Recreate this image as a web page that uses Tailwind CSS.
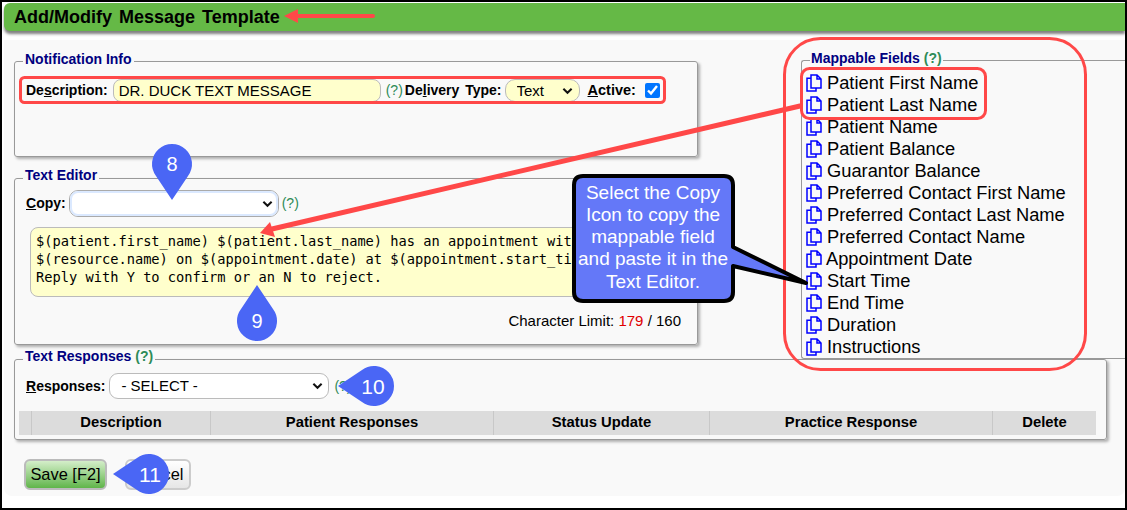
<!DOCTYPE html>
<html lang="en">
  <head>
    <meta charset="utf-8" />
    <meta name="viewport" content="width=device-width, initial-scale=1" />
    <title>Add/Modify Message Template</title>
    <script src="https://cdn.jsdelivr.net/npm/@tailwindcss/browser@4"></script>
  </head>
  <body class="bg-black h-[510px] overflow-hidden font-['Liberation_Sans',Arial,sans-serif] text-black">
    <svg class="hidden">
      <symbol id="copy" viewBox="0 0 16 18">
        <path d="M5 4.2H1V17H10V14M5 1H11L15 5V14H5ZM11 1V5H15" fill="none" stroke="#0000ff" stroke-width="1.5" />
      </symbol>
      <symbol id="chevron" viewBox="0 0 12 8">
        <path d="M1.5 1.5L6 6L10.5 1.5" fill="none" stroke="#111" stroke-width="2.2" />
      </symbol>
    </svg>
    <div class="relative mx-[2px] mt-[2px] h-[506px] bg-white">
      <header class="ml-[2px] h-[28px] mt-[1px] translate-y-[1px] pl-[10px] flex items-center bg-[#65b946] rounded-tl-[6px] rounded-bl-[6px] shadow-[0_3px_3px_rgba(0,0,0,0.5)]">
        <h1 class="text-[18px] font-bold [word-spacing:2px]">Add/Modify Message Template</h1>
      </header>
      <main class="absolute left-[2px] right-0 top-[38px] h-[456px] bg-[#f9f9f9] rounded-b-[8px] pl-[10px]">
        <div class="flex h-[320px]">
          <div class="w-[684px] shrink-0 pt-[14px]">
            <fieldset class="h-[103px] border border-[#999] rounded-[3px] shadow-[2px_2px_3px_rgba(0,0,0,0.3)] px-[6px]">
              <legend class="ml-[2px] px-[2px] text-[14px] leading-[15px] font-bold text-[#000080] -translate-y-[2px]">Notification Info</legend>
              <div class="flex items-center h-[23px] mt-[10px] ml-[5px] text-[14px] font-bold">
                <label>De<u>s</u>cription:</label>
                <input value="DR. DUCK TEXT MESSAGE" class="ml-[5px] w-[268px] h-[23px] pl-[5px] bg-[#ffffcc] border border-[#bbb] rounded-[8px] text-[15px] font-normal" />
                <span class="ml-[5px] font-normal text-[#2e8b57]">(?)</span>
                <label class="ml-[2px] [word-spacing:2px]">De<u>l</u>ivery Type:</label>
                <span class="relative ml-[3px]">
                  <select class="block appearance-none w-[75px] h-[23px] pl-[11px] bg-[#ffffcc] border border-[#bbb] rounded-[10px] text-[15px] font-normal"><option>Text</option></select>
                  <svg class="absolute right-[7px] top-[8px] w-[11px] h-[8px]"><use href="#chevron" /></svg>
                </span>
                <label class="ml-[8px] text-[14.5px]"><u>A</u>ctive:</label>
                <input type="checkbox" checked class="ml-[9px] w-[15px] h-[15px] m-0" />
              </div>
            </fieldset>
            <fieldset class="mt-[14px] h-[174px] border border-[#999] rounded-[3px] shadow-[2px_2px_3px_rgba(0,0,0,0.3)] px-[6px]">
              <legend class="ml-[2px] px-[2px] text-[14px] leading-[15px] font-bold text-[#000080] -translate-y-[3px]">Text Editor</legend>
              <div class="ml-[5px]">
                <div class="flex items-center mt-[4px] h-[27px] text-[14px] font-bold">
                  <label><u>C</u>opy:</label>
                  <span class="relative ml-[3px]">
                    <select class="block appearance-none w-[210px] h-[27px] bg-white border border-[#aaa] rounded-[9px] outline-[2px] outline-offset-[-3px] outline-[#dbe9ff]"><option></option></select>
                    <svg class="absolute right-[6px] top-[10px] w-[11px] h-[8px]"><use href="#chevron" /></svg>
                  </span>
                  <span class="ml-[3px] font-normal text-[#2e8b57]">(?)</span>
                </div>
                <textarea rows="3" class="block mt-[10px] ml-[4px] w-[655px] h-[70px] px-[5px] py-[4px] bg-[#ffffcc] border border-[#bbb] rounded-[8px] resize-none font-['DejaVu_Sans_Mono',monospace] text-[13.7px] leading-[18px]">$(patient.first_name) $(patient.last_name) has an appointment with
$(resource.name) on $(appointment.date) at $(appointment.start_time).
Reply with Y to confirm or an N to reject.</textarea>
                <p class="mt-[15px] pr-[10px] text-right text-[15px] leading-[18px]">Character Limit: <span class="text-[#e00000]">179</span> / 160</p>
              </div>
            </fieldset>
          </div>
          <fieldset class="ml-[103px] mt-[13px] h-[306px] flex-1 border border-r-0 border-[#999] rounded-l-[3px] pl-[4px]">
            <legend class="ml-[4px] px-[1px] text-[14px] leading-[15px] font-bold text-[#000080] -translate-y-[2px]">Mappable Fields <span class="text-[#2e8b57]">(?)</span></legend>
            <ul class="mt-[4px] text-[18.3px] leading-[22px]">
              <li class="flex items-center h-[22px]"><svg class="w-[16px] h-[18px] mr-[5px]"><use href="#copy" /></svg>Patient First Name</li>
              <li class="flex items-center h-[22px]"><svg class="w-[16px] h-[18px] mr-[5px]"><use href="#copy" /></svg>Patient Last Name</li>
              <li class="flex items-center h-[22px]"><svg class="w-[16px] h-[18px] mr-[5px]"><use href="#copy" /></svg>Patient Name</li>
              <li class="flex items-center h-[22px]"><svg class="w-[16px] h-[18px] mr-[5px]"><use href="#copy" /></svg>Patient Balance</li>
              <li class="flex items-center h-[22px]"><svg class="w-[16px] h-[18px] mr-[5px]"><use href="#copy" /></svg>Guarantor Balance</li>
              <li class="flex items-center h-[22px]"><svg class="w-[16px] h-[18px] mr-[5px]"><use href="#copy" /></svg>Preferred Contact First Name</li>
              <li class="flex items-center h-[22px]"><svg class="w-[16px] h-[18px] mr-[5px]"><use href="#copy" /></svg>Preferred Contact Last Name</li>
              <li class="flex items-center h-[22px]"><svg class="w-[16px] h-[18px] mr-[5px]"><use href="#copy" /></svg>Preferred Contact Name</li>
              <li class="flex items-center h-[22px]"><svg class="w-[16px] h-[18px] mr-[4px]"><use href="#copy" /></svg>Appointment Date</li>
              <li class="flex items-center h-[22px]"><svg class="w-[16px] h-[18px] mr-[5px]"><use href="#copy" /></svg>Start Time</li>
              <li class="flex items-center h-[22px]"><svg class="w-[16px] h-[18px] mr-[5px]"><use href="#copy" /></svg>End Time</li>
              <li class="flex items-center h-[22px]"><svg class="w-[16px] h-[18px] mr-[5px]"><use href="#copy" /></svg>Duration</li>
              <li class="flex items-center h-[22px]"><svg class="w-[16px] h-[18px] mr-[5px]"><use href="#copy" /></svg>Instructions</li>
            </ul>
          </fieldset>
        </div>
        <fieldset class="mt-[-8px] w-[1093px] h-[88px] border border-[#999] rounded-[3px] shadow-[2px_2px_3px_rgba(0,0,0,0.3)] pl-[4px]">
          <legend class="ml-[4px] px-[2px] text-[14px] leading-[15px] font-bold text-[#000080] -translate-y-[3px]">Text Responses <span class="text-[#2e8b57]">(?)</span></legend>
          <div class="flex items-center mt-[6px] ml-[7px] h-[26px] text-[14px] font-bold">
            <label><u>R</u>esponses:</label>
            <span class="relative ml-[4px]">
              <select class="block appearance-none w-[220px] h-[26px] pl-[11px] bg-white border border-[#bbb] rounded-[9px] text-[15px] font-normal"><option>- SELECT -</option></select>
              <svg class="absolute right-[6px] top-[9px] w-[11px] h-[8px]"><use href="#chevron" /></svg>
            </span>
            <span class="ml-[5px] font-normal text-[#2e8b57]">(?)</span>
          </div>
          <div class="grid grid-cols-[13px_179px_283px_216px_283px_103px] w-[1077px] mt-[12px] h-[24px] items-center bg-[#dcdcdc] text-[14.8px] font-bold text-center">
            <div class="h-full border-r border-[#c8c8c8]"></div>
            <div class="h-full leading-[22px] border-r border-[#c8c8c8]">Description</div>
            <div class="h-full leading-[22px] border-r border-[#c8c8c8]">Patient Responses</div>
            <div class="h-full leading-[22px] border-r border-[#c8c8c8]">Status Update</div>
            <div class="h-full leading-[22px] border-r border-[#c8c8c8]">Practice Response</div>
            <div class="h-full leading-[22px]">Delete</div>
          </div>
        </fieldset>
        <div class="flex gap-[18px] mt-[19px] ml-[10px]">
          <button class="w-[83px] h-[31px] text-[16.4px] border-2 border-[#bbb] rounded-[6px] bg-gradient-to-b from-[#d4eec9] to-[#5fb548]">Save [F2]</button>
          <button class="w-[66px] h-[31px] text-[16.4px] border-2 border-[#ccc] rounded-[6px] bg-gradient-to-b from-white to-[#e6e6e6]">Cancel</button>
        </div>
      </main>
    </div>

    <!-- annotations drawn over the screenshot -->
    <svg class="absolute left-0 top-0 w-[1127px] h-[510px] pointer-events-none" viewBox="0 0 1127 510" fill="none">
      <g stroke="#ff4848" stroke-width="3">
        <rect x="20.5" y="77.5" width="644" height="25" rx="4" />
        <rect x="801.5" y="68.5" width="184" height="50" rx="8" />
        <rect x="784.5" y="38.5" width="301" height="331" rx="36" />
      </g>
      <g stroke="#ff4848" stroke-linecap="round">
        <path d="M296 16H373" stroke-width="4" />
        <path d="M272 229L800 106" stroke-width="5" />
      </g>
      <g fill="#ff4848">
        <path d="M284 16L298 9V23Z" />
        <path d="M260 233L270 222L275 237Z" />
      </g>
      <path d="M583 176H724Q733 176 733 185V247L806 283L733 266V292Q733 301 724 301H583Q574 301 574 292V185Q574 176 583 176Z" fill="#6478f8" stroke="#000" stroke-width="4" stroke-linejoin="round" />
      <g fill="#4a66f5">
        <path d="M172 200L156 176A20 20 0 1 1 188 176Z" />
        <path d="M257 285L241 309A20 20 0 1 0 273 309Z" />
        <path d="M338 386L362 370A20 20 0 1 1 362 402Z" />
        <path d="M113 474L137 458A20 20 0 1 1 137 490Z" />
      </g>
      <g fill="#fff" font-family="'Liberation Sans',Arial,sans-serif" font-size="20" text-anchor="middle">
        <text x="172" y="171">8</text>
        <text x="257" y="328">9</text>
        <text x="373" y="394" font-size="21">10</text>
        <text x="150" y="482" font-size="21">11</text>
      </g>
      <g fill="#fff" font-family="'Liberation Sans',Arial,sans-serif" font-size="19" text-anchor="middle">
        <text x="653" y="199">Select the Copy</text>
        <text x="653" y="221">Icon to copy the</text>
        <text x="653" y="243">mappable field</text>
        <text x="653" y="265">and paste it in the</text>
        <text x="653" y="288">Text Editor.</text>
      </g>
    </svg>
  </body>
</html>
